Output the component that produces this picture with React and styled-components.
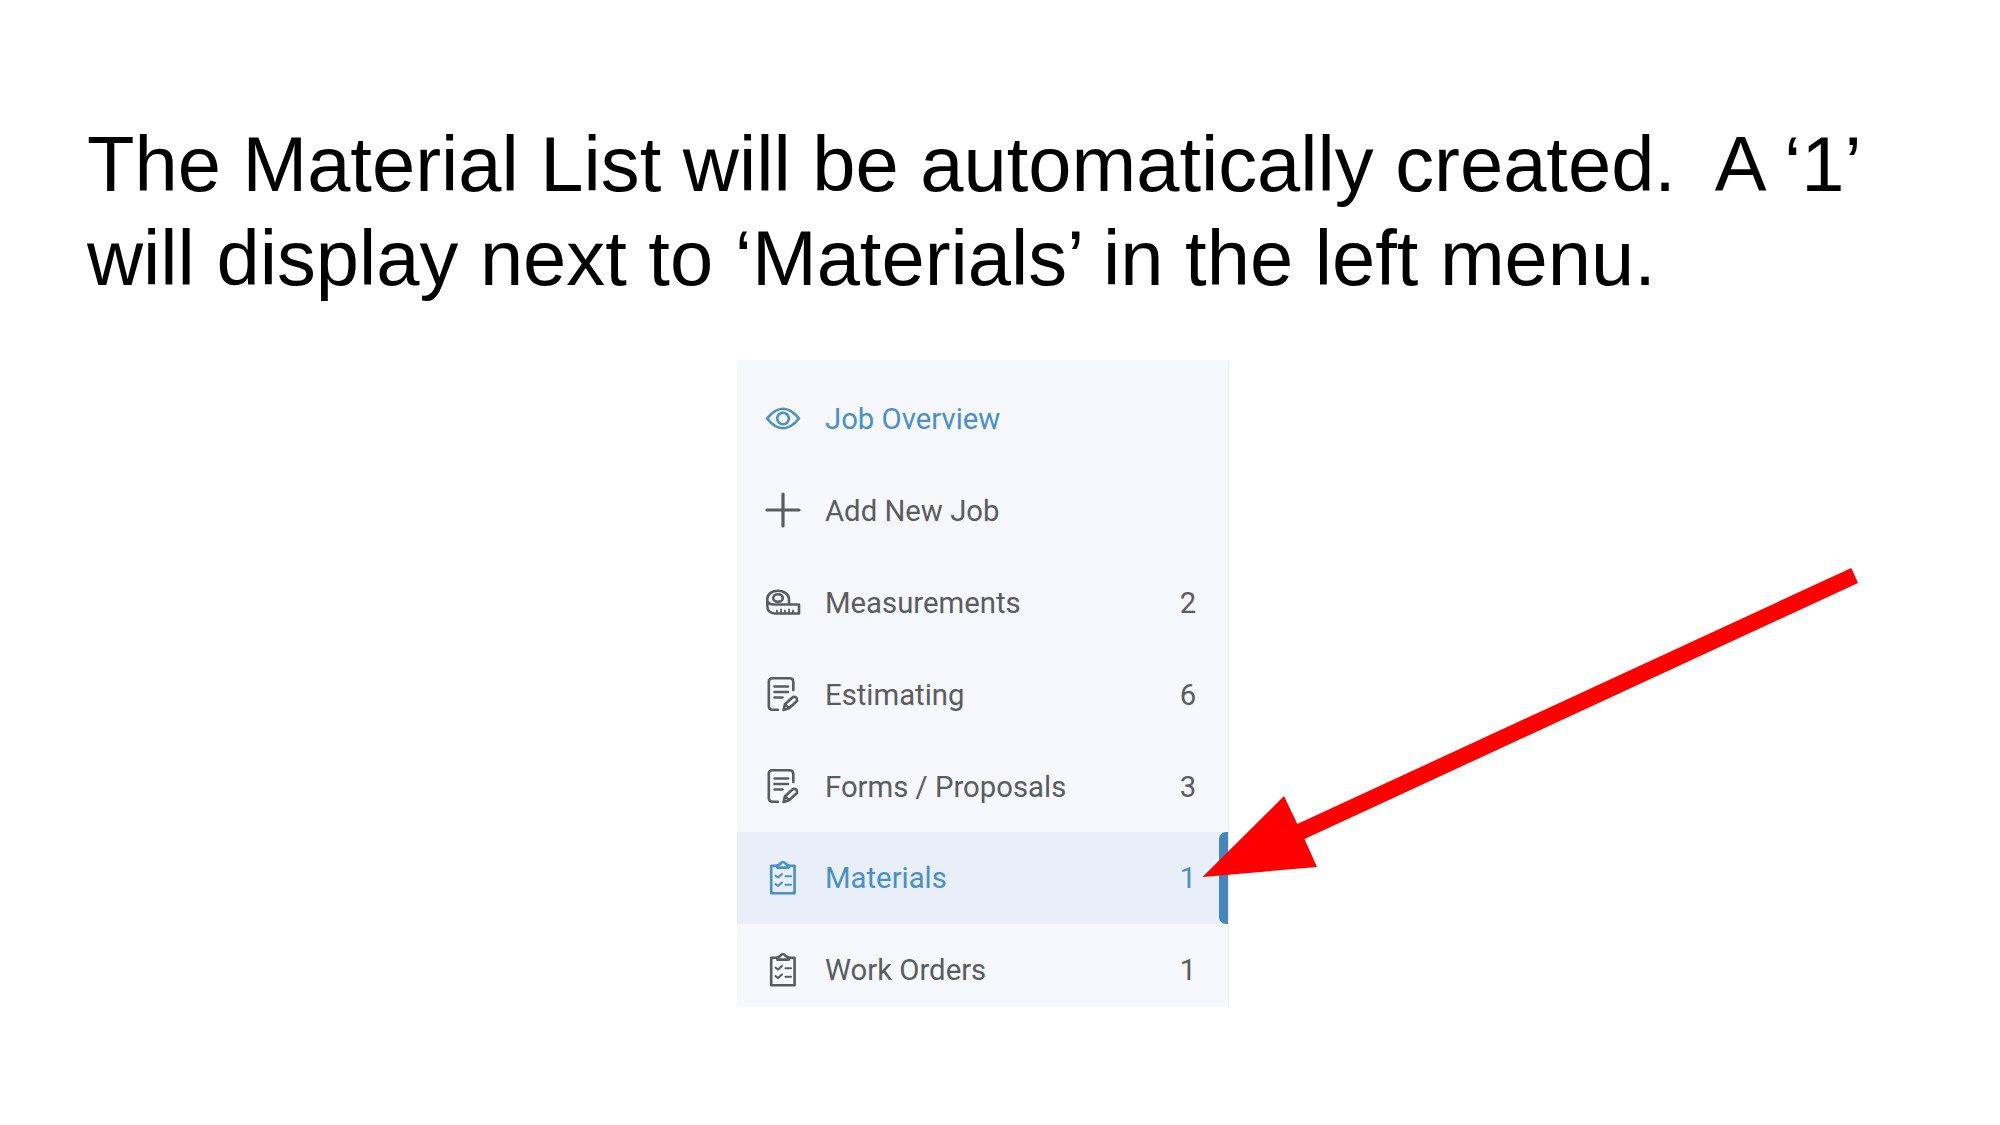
import React from "react";
import styled, { createGlobalStyle } from "styled-components";

const Global = createGlobalStyle`
  * { box-sizing: border-box; }
  body { margin: 0; background: #fff; }
`;

const Slide = styled.main`
  position: relative;
  width: 2000px;
  height: 1125px;
  overflow: hidden;
  display: flex;
  flex-direction: column;
  padding: 117px 87px 0;
  background: #fff;
`;

const Title = styled.h1`
  margin: 0;
  height: 243px;
  font: 400 77.7px/94px "Liberation Sans", Arial, sans-serif;
  color: #000;
`;

const Line = styled.span`
  display: block;
  white-space: pre;
`;

const Menu = styled.nav`
  width: 492px;
  height: 646.5px;
  margin-left: 650px;
  padding-top: 12.5px;
  overflow: hidden;
  background: #f6f8fd;
  border-right: 1.5px solid #e9edf3;
`;

const Item = styled.div`
  display: flex;
  align-items: center;
  height: 91.9px;
  padding: 0 0 0 28px;
  color: ${(p) => (p.$blue ? "#4a90c6" : "#5a5c60")};
  background: ${(p) => (p.$active ? "#e8eff9" : "transparent")};
  font: 400 29.3px/36px Roboto, sans-serif;
`;

const Icon = styled.svg`
  flex: none;
  width: 36px;
  height: 40px;
  margin-right: 24px;
  fill: none;
  stroke: currentColor;
  stroke-width: 2.6;
  stroke-linecap: round;
  stroke-linejoin: round;
`;

const Label = styled.span`
  flex: 1;
  padding-top: 1px;
  white-space: nowrap;
`;

const Count = styled.span`
  width: 18px;
  margin-right: 22px;
  padding-top: 1px;
  text-align: center;
`;

const Marker = styled.span`
  align-self: stretch;
  width: 9px;
  border-radius: 7px 0 0 7px;
  background: ${(p) => (p.$active ? "#4587bd" : "transparent")};
`;

const Arrow = styled.svg`
  position: absolute;
  left: 0;
  top: 0;
  width: 2000px;
  height: 1125px;
  pointer-events: none;
`;

const drawings = {
  eye: (
    <>
      <path d="M2 20.5Q18 1 34 20.5Q18 40 2 20.5Z" />
      <circle cx="18" cy="20.5" r="5.8" />
    </>
  ),
  plus: <path d="M2 20H34M18 4V36" strokeWidth="3.2" />,
  tape: (
    <>
      <path d="M2.3 17C2.3 6 23.5 6 24 17V22.5H34V31.5H10Q2.3 31 2.3 24ZM2.3 19Q4 23 10 22.5H24" />
      <ellipse cx="13" cy="16" rx="4.8" ry="3.8" />
      <path d="M12 31V28.5M16 31V27.5M20 31V28.5M24 31V27.5M28 31V28.5" strokeWidth="1.8" />
    </>
  ),
  note: (
    <>
      <path d="M28.3 16V8Q28.3 4.2 24.5 4.2H7.5Q3.8 4.2 3.8 8V32Q3.8 35.8 7.5 35.8H13" />
      <path d="M9.5 12.5H23M9.5 18H23M9.5 23.5H17.5" />
      <path d="M18.5 36L20 30.2L28 23Q32.5 22.3 32 27L24 34.2Z M20 30.2L24 34.2" />
    </>
  ),
  clipboard: (
    <>
      <path d="M12 7.8H6.2V35.2H29.6V7.8H24" />
      <path d="M12.3 9.6V7.4L15 6.2Q18 1.8 21 6.2L23.7 7.4V9.6Z" />
      <path d="M10.5 17.7L13 19.5L17 16M20.5 18.3H26M10.5 26.2L13 28L17 24.5M20.5 26.8H26" strokeWidth="2.1" />
    </>
  ),
};

const items = [
  { icon: "eye", label: "Job Overview", blue: true },
  { icon: "plus", label: "Add New Job" },
  { icon: "tape", label: "Measurements", count: 2 },
  { icon: "note", label: "Estimating", count: 6 },
  { icon: "note", label: "Forms / Proposals", count: 3 },
  { icon: "clipboard", label: "Materials", count: 1, blue: true, active: true },
  { icon: "clipboard", label: "Work Orders", count: 1 },
];

export default function App() {
  return (
    <Slide>
      <Global />
      <Title>
        <Line>{"The Material List will be automatically created.  A ‘1’"}</Line>
        <Line>will display next to ‘Materials’ in the left menu.</Line>
      </Title>
      <Menu>
        {items.map((item) => (
          <Item key={item.label} $blue={item.blue} $active={item.active}>
            <Icon viewBox="0 0 36 40">{drawings[item.icon]}</Icon>
            <Label>{item.label}</Label>
            <Count>{item.count}</Count>
            <Marker $active={item.active} />
          </Item>
        ))}
      </Menu>
      <Arrow viewBox="0 0 2000 1125">
        <path
          fill="#f00"
          d="M1202.5 877L1284 796L1297.3 824L1851.3 568L1858 583L1304.5 839L1317 867Z"
        />
      </Arrow>
    </Slide>
  );
}
